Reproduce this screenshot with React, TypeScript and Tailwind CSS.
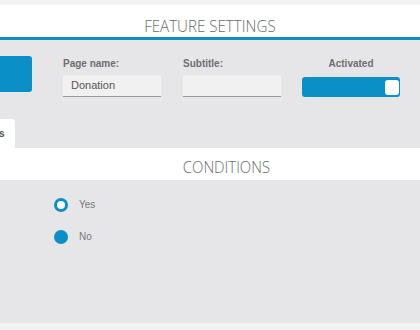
const App = () => {
  return (
    <div className="w-[420px] h-[330px] overflow-hidden bg-[#f2f2f2] font-['Liberation_Sans',Arial,sans-serif]">
      <div className="h-[5px]" />
      <div className="h-[35px] bg-white flex items-center justify-center border-b-[3px] border-[#0a8fc7]">
        <h1 className="font-['Open_Sans',sans-serif] font-light text-[17px] text-[#6b6b6b] scale-x-[0.89] mt-[9px] whitespace-nowrap">
          FEATURE SETTINGS
        </h1>
      </div>
      <div className="bg-[#e6e6e8] h-[283px] flex flex-col">
        <div className="flex items-start pt-[16px] h-[79px]">
          <div className="w-[32px] h-[36px] bg-[#0a8fc7] rounded-r-[3px]" />
          <div className="ml-[31px] w-[98px] flex flex-col">
            <span className="text-[10px] font-bold text-[#6e6e6e] mt-[2px] leading-[12px]">Page name:</span>
            <div className="mt-[5px] h-[22px] bg-[#f1f1f1] border-b border-[#9a9a9a] flex items-center px-[8px] text-[11px] text-[#555]">
              Donation
            </div>
          </div>
          <div className="ml-[22px] w-[98px] flex flex-col">
            <span className="text-[10px] font-bold text-[#6e6e6e] mt-[2px] leading-[12px]">Subtitle:</span>
            <div className="mt-[5px] h-[22px] bg-[#f1f1f1] border-b border-[#9a9a9a]" />
          </div>
          <div className="ml-[21px] w-[98px] flex flex-col items-center">
            <span className="text-[10px] font-bold text-[#6e6e6e] mt-[2px] leading-[12px]">Activated</span>
            <div className="mt-[7px] w-[98px] h-[20px] bg-[#0a8fc7] rounded-[3px] flex items-center justify-end pr-[1px]">
              <div className="w-[14px] h-[15px] bg-white rounded-[3px]" />
            </div>
          </div>
        </div>
        <div className="flex">
          <div className="w-[16px] h-[29px] bg-white rounded-tr-[3px] flex items-center text-[10px] font-bold text-[#555] -ml-[1px]">
            s
          </div>
        </div>
        <div className="h-[32px] bg-white flex items-center justify-center pl-[33px]">
          <h2 className="font-['Open_Sans',sans-serif] font-light text-[16.5px] text-[#6b6b6b] scale-x-[0.9] mt-[7px] whitespace-nowrap">
            CONDITIONS
          </h2>
        </div>
        <div className="flex flex-col pl-[54px] pt-[17px] gap-[17px]">
          <label className="flex items-center gap-[11px]">
            <span className="w-[14px] h-[14px] rounded-full border-[3px] border-[#0a8fc7] bg-white" />
            <span className="text-[10px] text-[#777]">Yes</span>
          </label>
          <label className="flex items-center gap-[11px]">
            <span className="w-[14px] h-[14px] rounded-full bg-[#0a8fc7]" />
            <span className="text-[10px] text-[#777]">No</span>
          </label>
        </div>
      </div>
    </div>
  );
};

export default App;
